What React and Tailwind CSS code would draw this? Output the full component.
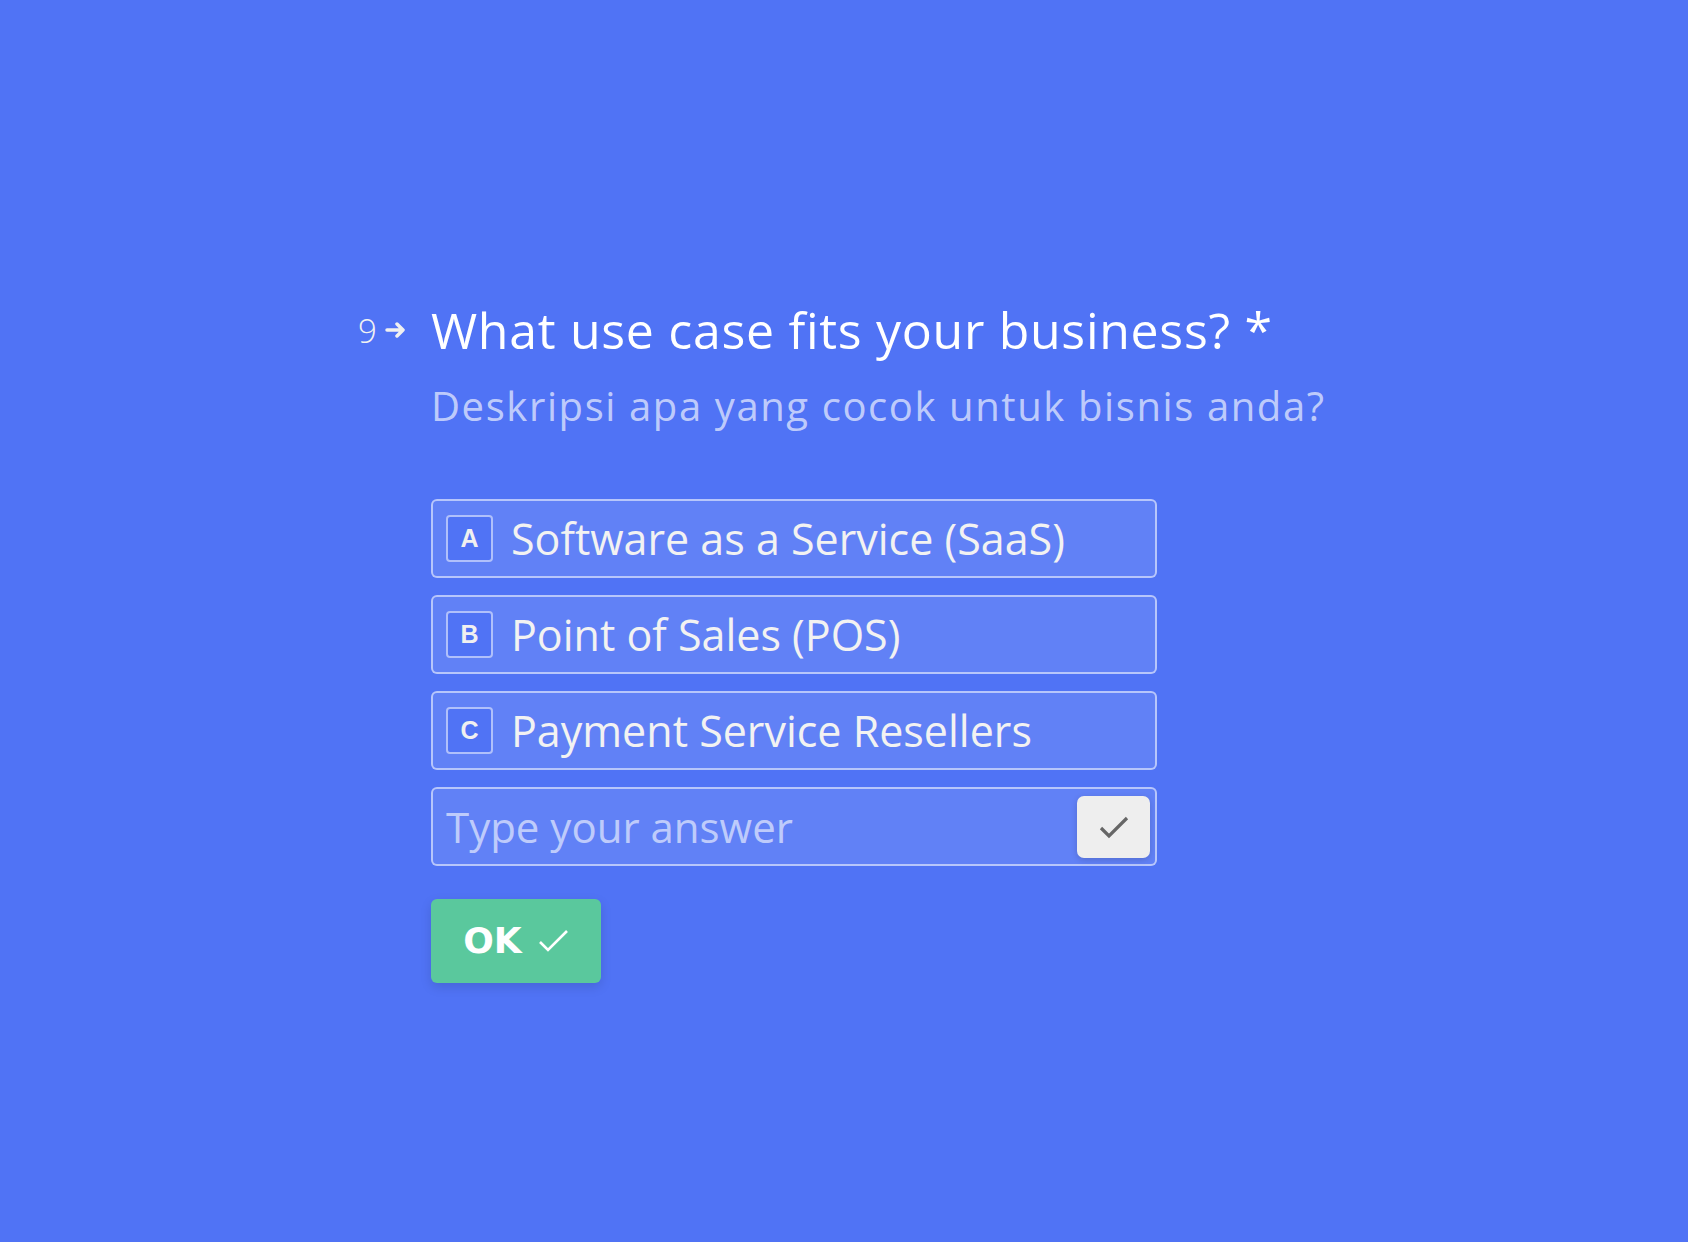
import React from "react";

const font = "font-['Open_Sans','Noto_Sans',sans-serif]";

function Option({ letter, label }) {
  return (
    <div className="flex h-[79px] items-center rounded-[6px] border-2 border-[rgba(255,255,255,0.55)] bg-[rgba(255,255,255,0.1)] pl-[13px]">
      <div className="flex h-[47px] w-[47px] items-center justify-center rounded-[4px] border-2 border-[rgba(255,255,255,0.55)] bg-[#5073f5] font-['Liberation_Sans',Arial,sans-serif] text-[25px] font-bold text-[#f0f0f0]">
        {letter}
      </div>
      <span className="ml-[18px] text-[43px] leading-none text-[#f2f2f2]">{label}</span>
    </div>
  );
}

export default function App() {
  return (
    <div className={`min-h-screen w-full bg-[#5073f5] ${font}`}>
      <div className="flex pl-[358px] pt-[300px]">
        <div className="flex h-[60px] w-[73px] items-center">
          <span className="text-[33px] font-light leading-none text-[#f2f2f2]">9</span>
          <svg width="22" height="16" viewBox="0 0 22 16" className="ml-[8px]">
            <path d="M2 8 H18 M12 2 L18 8 L12 14" fill="none" stroke="#f0f0f0" strokeWidth="3.5" strokeLinecap="round" strokeLinejoin="round" />
          </svg>
        </div>
        <div className="flex flex-col">
          <h1 className="text-[50px] font-normal leading-[60px] tracking-[0.7px] text-white">
            What use case fits your business? *
          </h1>
          <p className="mt-[20px] text-[40px] leading-[52px] tracking-[1.6px] text-[rgba(255,255,255,0.65)]">
            Deskripsi apa yang cocok untuk bisnis anda?
          </p>
          <div className="mt-[67px] flex w-[726px] flex-col gap-[17px]">
            <Option letter="A" label="Software as a Service (SaaS)" />
            <Option letter="B" label="Point of Sales (POS)" />
            <Option letter="C" label="Payment Service Resellers" />
            <div className="flex h-[79px] items-center justify-between rounded-[6px] border-2 border-[rgba(255,255,255,0.55)] bg-[rgba(255,255,255,0.1)] pl-[13px] pr-[5px]">
              <span className="text-[42px] leading-none text-[rgba(255,255,255,0.6)]">Type your answer</span>
              <div className="flex h-[62px] w-[73px] items-center justify-center rounded-[7px] bg-[#eeeeee] shadow-[0_2px_6px_rgba(0,0,0,0.15)]">
                <svg width="30" height="24" viewBox="0 0 30 24">
                  <path d="M2 13 L10 21 L28 3" fill="none" stroke="#666666" strokeWidth="3.2" />
                </svg>
              </div>
            </div>
          </div>
          <button className="mt-[33px] flex h-[84px] w-[170px] items-center justify-center rounded-[6px] bg-[#5ac89d] shadow-[0_4px_12px_rgba(0,0,0,0.12)]">
            <span className="font-['DejaVu_Sans',sans-serif] text-[36px] font-bold leading-none text-white">OK</span>
            <svg width="31" height="24" viewBox="0 0 31 24" className="ml-[16px]">
              <path d="M2 13 L10 21 L29 2" fill="none" stroke="#ffffff" strokeWidth="2.6" />
            </svg>
          </button>
        </div>
      </div>
    </div>
  );
}
